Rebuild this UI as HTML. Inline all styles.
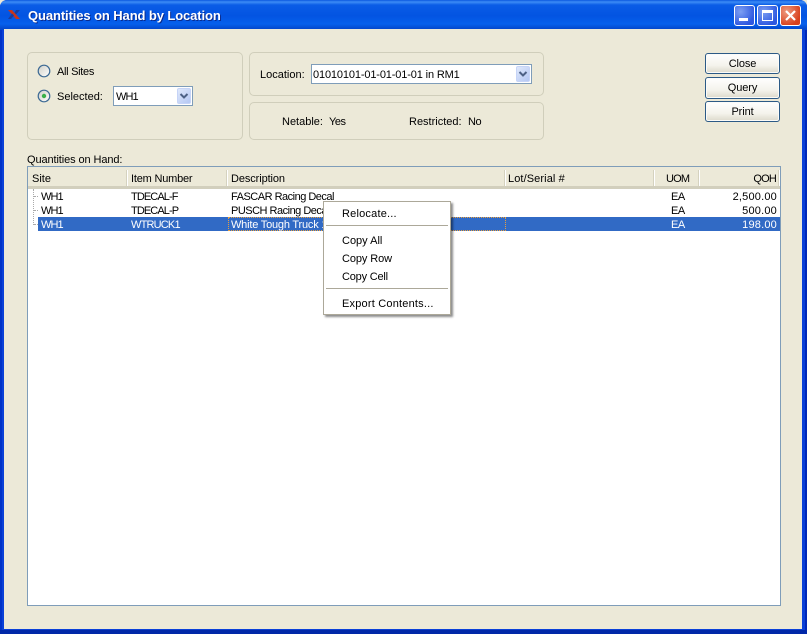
<!DOCTYPE html>
<html>
<head>
<meta charset="utf-8">
<style>
html,body{margin:0;padding:0;width:807px;height:634px;overflow:hidden;background:#ece9d8}
body{position:relative;font-family:"Liberation Sans",Arial,sans-serif;font-size:11px;color:#000}
div,svg{position:absolute;box-sizing:border-box}
.t{white-space:nowrap;line-height:14px;height:14px;margin-top:1px}
.r{text-align:right}
.gb{border:1px solid #d0cebb;border-radius:5px}
.btn{left:705px;width:75px;border:1px solid #2c5a86;border-radius:3px;background:linear-gradient(#fff,#f4f3ec 60%,#dcd9cb);text-align:center;line-height:20px;box-shadow:inset 0 0 0 1px #fbfbf8;letter-spacing:-.1px}
.hs{top:170px;width:2px;height:16px;background:#d5d2bf;border-right:1px solid #fff}
.w{color:#fff}
.sep{left:326px;width:122px;height:2px;background:#aca899;border-bottom:1px solid #fff}
.combo{background:#fff;border:1px solid #7f9db9}
.arrow{background:linear-gradient(135deg,#dfe8fb,#b4c7f3);border-radius:2px;border:1px solid #c6d4f7}
.u{letter-spacing:-.9px}
.n{letter-spacing:-.5px}
</style>
</head>
<body>
<!-- frame -->
<div style="left:0;top:0;width:807px;height:634px;background:#0a40d8;border-radius:7px 7px 0 0"></div>
<div style="left:0;top:0;width:807px;height:30px;border-radius:7px 7px 0 0;background:linear-gradient(#0a58e0 0,#3c8cf6 2px,#0a5ce6 5px,#0354e2 16px,#0660ec 24px,#0448cc 29px)"></div>
<div style="left:0;top:30px;width:2px;height:604px;background:#0032c8"></div>
<div style="right:0;top:30px;width:2px;height:604px;background:#0028b8"></div>
<div style="left:0;top:630px;width:807px;height:4px;background:#0028a8"></div>
<div style="left:4px;top:29px;width:798px;height:600px;background:#ece9d8"></div>

<!-- title icon -->
<svg style="left:7px;top:8px" width="14" height="14" viewBox="0 0 14 14">
<path d="M1 2 L5 2 L13 11 L9 11 Z" fill="#c8341c"/>
<path d="M1 11 L4 11 L7 7.5 L5 5.5 Z" fill="#1c3c9c"/>
<path d="M9 2 L13 2 L9 6.5 L7.6 4.8 Z" fill="#1c3c9c"/>
</svg>
<div class="t" style="left:29px;top:8px;font-size:13px;letter-spacing:-.1px;font-weight:bold;color:#0a2a8c;height:15px;line-height:15px">Quantities on Hand by Location</div>
<div class="t" style="left:28px;top:7px;font-size:13px;letter-spacing:-.1px;font-weight:bold;color:#fff;height:15px;line-height:15px">Quantities on Hand by Location</div>

<!-- window buttons -->
<div style="left:734px;top:5px;width:21px;height:21px;border:1px solid #fff;border-radius:3px;background:radial-gradient(circle at 30% 30%,#7d9ff2,#2e58e0 75%)"></div>
<div style="left:739px;top:18px;width:9px;height:3px;background:#fff"></div>
<div style="left:757px;top:5px;width:21px;height:21px;border:1px solid #fff;border-radius:3px;background:radial-gradient(circle at 30% 30%,#7d9ff2,#2e58e0 75%)"></div>
<div style="left:762px;top:10px;width:11px;height:11px;border:1px solid #fff;border-top:3px solid #fff"></div>
<div style="left:780px;top:5px;width:21px;height:21px;border:1px solid #fff;border-radius:3px;background:radial-gradient(circle at 30% 30%,#ee9a80,#d8401c 75%)"></div>
<svg style="left:780px;top:5px" width="21" height="21" viewBox="0 0 21 21"><path d="M6 6 L15 15 M15 6 L6 15" stroke="#fff" stroke-width="2.2" fill="none"/></svg>

<!-- group boxes -->
<div class="gb" style="left:27px;top:52px;width:216px;height:88px"></div>
<div class="gb" style="left:249px;top:52px;width:295px;height:44px"></div>
<div class="gb" style="left:249px;top:102px;width:295px;height:38px"></div>

<!-- radios -->
<svg style="left:37px;top:64px" width="14" height="14" viewBox="0 0 14 14"><defs><linearGradient id="rg" x1="0" y1="0" x2="1" y2="1"><stop offset="0" stop-color="#cfcfc6"/><stop offset="1" stop-color="#fff"/></linearGradient></defs><circle cx="7" cy="7" r="5.8" fill="url(#rg)" stroke="#3d6a94" stroke-width="1.2"/></svg>
<div class="t" style="left:57px;top:64px;letter-spacing:-.3px">All Sites</div>
<svg style="left:37px;top:89px" width="14" height="14" viewBox="0 0 14 14"><circle cx="7" cy="7" r="5.8" fill="url(#rg)" stroke="#3d6a94" stroke-width="1.2"/><circle cx="7" cy="7" r="2.2" fill="#3ab04a"/></svg>
<div class="t" style="left:57px;top:89px">Selected:</div>
<div class="combo" style="left:113px;top:86px;width:80px;height:20px"></div>
<div class="t u" style="left:116px;top:89px">WH1</div>
<div class="arrow" style="left:177px;top:88px;width:14px;height:16px"></div>
<svg style="left:177px;top:88px" width="14" height="16" viewBox="0 0 14 16"><path d="M3.5 6 L7 9.5 L10.5 6" stroke="#4d6185" stroke-width="2" fill="none"/></svg>

<div class="t" style="left:260px;top:67px">Location:</div>
<div class="combo" style="left:311px;top:64px;width:221px;height:20px"></div>
<div class="t" style="left:313px;top:67px;letter-spacing:-.14px">01010101-01-01-01-01 in RM1</div>
<div class="arrow" style="left:516px;top:66px;width:14px;height:16px"></div>
<svg style="left:516px;top:66px" width="14" height="16" viewBox="0 0 14 16"><path d="M3.5 6 L7 9.5 L10.5 6" stroke="#4d6185" stroke-width="2" fill="none"/></svg>

<div class="t" style="left:282px;top:114px">Netable:</div>
<div class="t n" style="left:329px;top:114px">Yes</div>
<div class="t" style="left:409px;top:114px">Restricted:</div>
<div class="t n" style="left:468px;top:114px">No</div>

<!-- buttons -->
<div class="btn" style="top:53px;height:21px">Close</div>
<div class="btn" style="top:77px;height:22px;line-height:21px">Query</div>
<div class="btn" style="top:101px;height:21px">Print</div>

<div class="t" style="left:27px;top:152px;letter-spacing:-.1px">Quantities on Hand:</div>

<!-- table -->
<div style="left:27px;top:166px;width:754px;height:440px;background:#fff;border:1px solid #7f9db9"></div>
<div style="left:28px;top:167px;width:752px;height:20px;background:#ece9d8"></div>
<div style="left:28px;top:186px;width:752px;height:3px;background:#d2cfbd"></div>
<div class="hs" style="left:126px"></div>
<div class="hs" style="left:226px"></div>
<div class="hs" style="left:504px"></div>
<div class="hs" style="left:653px"></div>
<div class="hs" style="left:698px"></div>
<div class="hs" style="left:778px"></div>
<div class="t" style="left:32px;top:171px">Site</div>
<div class="t" style="left:131px;top:171px;letter-spacing:-.2px">Item Number</div>
<div class="t" style="left:231px;top:171px;letter-spacing:-.1px">Description</div>
<div class="t" style="left:508px;top:171px;letter-spacing:.1px">Lot/Serial #</div>
<div class="t" style="left:666px;top:171px;letter-spacing:-.8px">UOM</div>
<div class="t r" style="left:720px;width:56px;top:171px;letter-spacing:-.8px">QOH</div>

<!-- tree lines -->
<div style="left:33px;top:189px;width:1px;height:36px;border-left:1px dotted #aaa"></div>
<div style="left:34px;top:196px;width:4px;height:1px;border-top:1px dotted #aaa"></div>
<div style="left:34px;top:210px;width:4px;height:1px;border-top:1px dotted #aaa"></div>
<div style="left:34px;top:224px;width:4px;height:1px;border-top:1px dotted #aaa"></div>

<!-- rows -->
<div style="left:38px;top:217px;width:742px;height:14px;background:#316ac5"></div>
<div style="left:228px;top:217px;width:278px;height:14px;border:1px dotted #e8a040"></div>

<div class="t u" style="left:41px;top:189px">WH1</div>
<div class="t u" style="left:131px;top:189px">TDECAL-F</div>
<div class="t n" style="left:231px;top:189px">FASCAR Racing Decal</div>
<div class="t n" style="left:671px;top:189px">EA</div>
<div class="t r" style="left:700px;width:77px;top:189px;letter-spacing:.2px">2,500.00</div>

<div class="t u" style="left:41px;top:203px">WH1</div>
<div class="t u" style="left:131px;top:203px">TDECAL-P</div>
<div class="t n" style="left:231px;top:203px">PUSCH Racing Decal</div>
<div class="t n" style="left:671px;top:203px">EA</div>
<div class="t r" style="left:700px;width:77px;top:203px;letter-spacing:.2px">500.00</div>

<div class="t w u" style="left:41px;top:217px">WH1</div>
<div class="t w" style="left:131px;top:217px;letter-spacing:-.8px">WTRUCK1</div>
<div class="t w" style="left:231px;top:217px;letter-spacing:-.2px">White Tough Truck 1</div>
<div class="t n w" style="left:671px;top:217px">EA</div>
<div class="t r w" style="left:700px;width:77px;top:217px;letter-spacing:.2px">198.00</div>

<!-- context menu -->
<div style="left:323px;top:201px;width:128px;height:114px;background:#fff;border:1px solid #aca899;box-shadow:2px 2px 2px rgba(0,0,0,.45)"></div>
<div class="t" style="left:342px;top:206px;letter-spacing:.2px">Relocate...</div>
<div class="sep" style="top:225px"></div>
<div class="t" style="left:342px;top:233px">Copy All</div>
<div class="t" style="left:342px;top:251px;letter-spacing:-.1px">Copy Row</div>
<div class="t" style="left:342px;top:269px;letter-spacing:-.2px">Copy Cell</div>
<div class="sep" style="top:288px"></div>
<div class="t" style="left:342px;top:296px;letter-spacing:.2px">Export Contents...</div>
</body>
</html>
